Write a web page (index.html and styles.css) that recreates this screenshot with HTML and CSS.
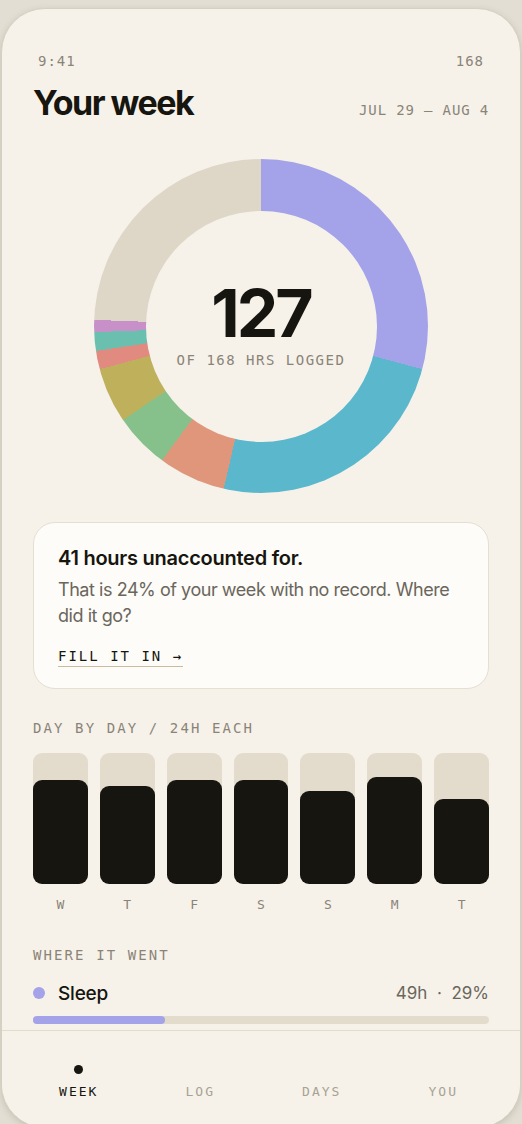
FILE: index.html
```html
<!DOCTYPE html>
<html lang="en">
<head>
<meta charset="utf-8">
<title>Your week</title>
<link rel="stylesheet" href="styles.css">
</head>
<body>
<div class="phone">
  <div class="status">
    <span>9:41</span>
    <span>168</span>
  </div>
  <div class="scroll">
    <header class="head">
      <h1 class="title">Your week</h1>
      <span class="range">JUL 29 – AUG 4</span>
    </header>

    <div class="donut">
      <div class="donut-hole">
        <div class="big">127</div>
        <div class="sub">OF 168 HRS LOGGED</div>
      </div>
    </div>

    <section class="card">
      <h2 class="card-title">41 hours unaccounted for.</h2>
      <p class="card-text">That is 24% of your week with no record. Where did it go?</p>
      <a class="card-link">FILL IT IN →</a>
    </section>

    <div class="label">DAY BY DAY / 24H EACH</div>
    <div class="bars">
      <div class="bar-col"><div class="track"><div class="fill" style="height:79.4%"></div></div><span class="day">W</span></div>
      <div class="bar-col"><div class="track"><div class="fill" style="height:74.8%"></div></div><span class="day">T</span></div>
      <div class="bar-col"><div class="track"><div class="fill" style="height:79.4%"></div></div><span class="day">F</span></div>
      <div class="bar-col"><div class="track"><div class="fill" style="height:79.4%"></div></div><span class="day">S</span></div>
      <div class="bar-col"><div class="track"><div class="fill" style="height:71%"></div></div><span class="day">S</span></div>
      <div class="bar-col"><div class="track"><div class="fill" style="height:81.7%"></div></div><span class="day">M</span></div>
      <div class="bar-col"><div class="track"><div class="fill" style="height:64.9%"></div></div><span class="day">T</span></div>
    </div>

    <div class="label label-where">WHERE IT WENT</div>
    <div class="cat">
      <div class="cat-row">
        <span class="dot dot-sleep"></span>
        <span class="cat-name">Sleep</span>
        <span class="cat-val">49h &nbsp;·&nbsp; 29%</span>
      </div>
      <div class="progress"><div class="progress-fill" style="width:29%"></div></div>
    </div>
  </div>
  <nav class="nav">
    <div class="nav-item active"><span class="nav-dot"></span><span>WEEK</span></div>
    <div class="nav-item"><span class="nav-dot"></span><span>LOG</span></div>
    <div class="nav-item"><span class="nav-dot"></span><span>DAYS</span></div>
    <div class="nav-item"><span class="nav-dot"></span><span>YOU</span></div>
  </nav>
</div>
</body>
</html>
```

FILE: styles.css
```css
html, body {
  margin: 0;
  padding: 0;
  overflow: hidden;
  background: #e2ded3;
}
body {
  padding: 8px 1px 0;
  font-family: Inter, "Liberation Sans", sans-serif;
  color: #16150f;
}
.phone {
  box-sizing: border-box;
  width: 520px;
  height: 1120px;
  border: 1px solid #d6d0c2;
  border-radius: 44px;
  background: #f6f2ea;
  overflow: hidden;
  display: flex;
  flex-direction: column;
  box-shadow: 0 2px 6px rgba(120, 110, 90, 0.25);
}
.status {
  display: flex;
  justify-content: space-between;
  padding: 44px 36px 0;
  font-family: "DejaVu Sans Mono", monospace;
  font-size: 14px;
  line-height: 16px;
  letter-spacing: 1px;
  color: #8a8478;
}
.scroll {
  flex: 1;
  overflow: hidden;
  padding: 0 31px;
}
.head {
  display: flex;
  justify-content: space-between;
  align-items: baseline;
  margin-top: 14px;
}
.title {
  margin: 0;
  font-size: 34px;
  line-height: 40px;
  font-weight: 700;
  letter-spacing: -1.5px;
}
.range {
  font-family: "DejaVu Sans Mono", monospace;
  font-size: 14px;
  letter-spacing: 0.85px;
  color: #8a8478;
}
.donut {
  width: 334px;
  height: 334px;
  margin: 36px auto 0;
  border-radius: 50%;
  background: conic-gradient(
    #a4a2e8 0deg 105deg,
    #5ab7cc 105deg 192.9deg,
    #e0967a 192.9deg 216.4deg,
    #86c08a 216.4deg 235.7deg,
    #bfb05c 235.7deg 255deg,
    #e08a80 255deg 261.4deg,
    #6bbfae 261.4deg 267.9deg,
    #c890c8 267.9deg 272.1deg,
    #ded7c8 272.1deg 360deg
  );
  display: flex;
  align-items: center;
  justify-content: center;
}
.donut-hole {
  box-sizing: border-box;
  width: 231px;
  height: 231px;
  padding-bottom: 4px;
  border-radius: 50%;
  background: #f6f2ea;
  display: flex;
  flex-direction: column;
  align-items: center;
  justify-content: center;
}
.big {
  font-size: 66px;
  line-height: 66px;
  font-weight: 700;
  letter-spacing: -3px;
}
.sub {
  margin-top: 6px;
  font-family: "DejaVu Sans Mono", monospace;
  font-size: 14px;
  line-height: 17px;
  letter-spacing: 1.5px;
  color: #8a8478;
}
.card {
  margin-top: 29px;
  background: #fdfcf8;
  border: 1px solid #e5dfd2;
  border-radius: 22px;
  padding: 22px 24px 21px;
}
.card-title {
  margin: 0;
  font-size: 20px;
  line-height: 26px;
  font-weight: 600;
  letter-spacing: -0.25px;
}
.card-text {
  margin: 6px 0 0;
  font-size: 18px;
  line-height: 26px;
  color: #6b665c;
  letter-spacing: -0.45px;
}
.card-link {
  display: inline-block;
  margin-top: 18px;
  font-family: "DejaVu Sans Mono", monospace;
  font-size: 14px;
  line-height: 18px;
  letter-spacing: 2px;
  color: #16150f;
  border-bottom: 1px solid #c9bc9e;
  padding-bottom: 1px;
}
.label {
  margin-top: 30px;
  font-family: "DejaVu Sans Mono", monospace;
  font-size: 14px;
  line-height: 18px;
  letter-spacing: 2.1px;
  color: #8a8478;
}
.bars {
  display: grid;
  grid-template-columns: repeat(7, 1fr);
  gap: 12px;
  margin-top: 16px;
}
.bar-col {
  display: flex;
  flex-direction: column;
  align-items: center;
}
.track {
  width: 100%;
  height: 131px;
  border-radius: 9px;
  background: #e3dccd;
  display: flex;
  flex-direction: column;
  justify-content: flex-end;
}
.fill {
  width: 100%;
  border-radius: 9px;
  background: #16150f;
}
.day {
  margin-top: 13px;
  font-family: "DejaVu Sans Mono", monospace;
  font-size: 13px;
  line-height: 16px;
  color: #8a8478;
}
.label-where {
  margin-top: 33px;
}
.cat {
  margin-top: 16px;
}
.cat-row {
  display: flex;
  align-items: center;
  height: 26px;
}
.dot {
  width: 12px;
  height: 12px;
  border-radius: 50%;
  margin-right: 13px;
}
.dot-sleep {
  background: #a4a2e8;
}
.cat-name {
  font-size: 19px;
  font-weight: 500;
  letter-spacing: -0.2px;
}
.cat-val {
  margin-left: auto;
  font-size: 17px;
  color: #6b665c;
}
.progress {
  margin-top: 10px;
  height: 8px;
  border-radius: 4px;
  background: #e3dccd;
}
.progress-fill {
  height: 100%;
  border-radius: 4px;
  background: #a4a2e8;
}
.nav {
  flex: 0 0 auto;
  height: 96px;
  border-top: 1px solid #e3dccd;
  background: #f6f2ea;
  display: grid;
  grid-template-columns: repeat(4, 1fr);
  padding: 0 16px;
}
.nav-item {
  display: flex;
  flex-direction: column;
  align-items: center;
  padding-top: 34px;
  font-family: "DejaVu Sans Mono", monospace;
  font-size: 13px;
  line-height: 16px;
  letter-spacing: 2px;
  color: #a8a294;
}
.nav-item.active {
  color: #16150f;
}
.nav-dot {
  width: 9px;
  height: 9px;
  border-radius: 50%;
  margin-bottom: 10px;
  background: transparent;
}
.nav-item.active .nav-dot {
  background: #16150f;
}
```
